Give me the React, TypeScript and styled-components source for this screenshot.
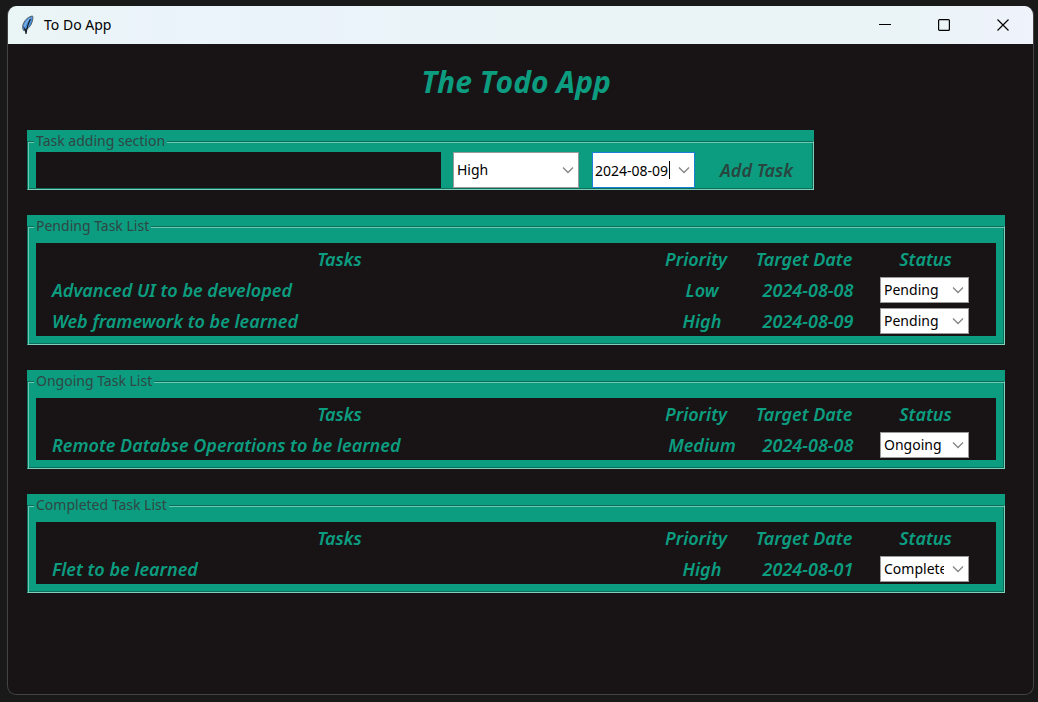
import React from "react";
import styled, { createGlobalStyle } from "styled-components";

const green = "#0c9d80";
const ink = "#181415";

const GlobalStyle = createGlobalStyle`
  * { box-sizing: border-box; }
  html, body, #root { height: 100%; }
  body {
    margin: 0;
    background: #191919;
    font-family: "Noto Sans", "Open Sans", sans-serif;
    font-size: 14px;
    color: #000;
  }
  button, input, select { font: inherit; margin: 0; border: 0; border-radius: 0; }
`;

const Desktop = styled.div`
  min-height: 100%;
  display: flex;
  padding: 6px 4px 7px 7px;
`;

const Window = styled.div`
  flex: 1;
  min-width: 0;
  display: flex;
  flex-direction: column;
  background: ${ink};
  border: 1px solid #444344;
  border-top: 0;
  border-radius: 9px;
  overflow: hidden;
`;

const TitleBar = styled.header`
  display: flex;
  align-items: center;
  height: 38px;
  padding: 0 1px 0 12px;
  background: linear-gradient(90deg, #eaf5f5 0%, #ebf3fb 18%, #eaf4f7 50%, #eaf4f7 88%, #eff3fb 100%);
`;

const AppName = styled.span`
  flex: 1;
  margin-left: 8px;
  font-size: 14px;
  line-height: 20px;
`;

const WindowButton = styled.button`
  display: flex;
  align-items: center;
  justify-content: center;
  width: 59px;
  height: 38px;
  padding: 0;
  background: transparent;
`;

const Main = styled.main`
  display: flex;
  flex-direction: column;
  gap: 25px;
  padding: 15px 28px 24px 19px;
`;

const Title = styled.h1`
  margin: 0;
  text-align: center;
  font-family: "Open Sans", "Noto Sans", sans-serif;
  font-size: 30px;
  line-height: 46px;
  font-weight: 700;
  font-style: italic;
  color: ${green};
`;

const Panel = styled.section<{ $fit?: boolean }>`
  background: ${green};
  width: ${(p) => (p.$fit ? "fit-content" : "auto")};
`;

const Frame = styled.fieldset<{ $top: number; $bottom: number }>`
  min-width: 0;
  margin: 0;
  padding: ${(p) => p.$top}px 8px ${(p) => p.$bottom}px;
  border: 1px solid;
  border-color: #0a6e5a #7fd0bb #7fd0bb #0a6e5a;
  box-shadow: inset 1px 1px 0 #6cc8b0, inset -1px -1px 0 #0a6e5a;
`;

const Legend = styled.legend`
  height: 22px;
  margin-left: -2px;
  padding: 0 2px;
  background: ${green};
  color: #2f4644;
  font-size: 14px;
  line-height: 22px;
`;

const AddRow = styled.form`
  display: flex;
  align-items: stretch;
  height: 36px;
`;

const TaskInput = styled.input`
  width: 405px;
  padding: 0 4px;
  margin-right: 12px;
  background: ${ink};
  color: ${green};
  outline: 0;
`;

const Box = styled.div<{ $width: number; $height: number; $active?: boolean }>`
  position: relative;
  display: flex;
  align-items: center;
  width: ${(p) => p.$width}px;
  height: ${(p) => p.$height}px;
  background: #fff;
  border: 1px solid ${(p) => (p.$active ? "#1a7fd8" : "#9a9a9a")};
`;

const Select = styled.select`
  appearance: none;
  width: 100%;
  height: 100%;
  padding: 0 24px 0 3px;
  background: transparent;
  color: #000;
  font-size: 14px;
  line-height: 20px;
  outline: 0;
`;

const ChevronSlot = styled.span`
  position: absolute;
  right: 4px;
  top: 0;
  bottom: 0;
  display: flex;
  align-items: center;
  pointer-events: none;
`;

const DateInput = styled.input`
  width: 76px;
  height: 100%;
  padding: 0 0 0 2px;
  background: transparent;
  outline: 0;
`;

const Caret = styled.span`
  width: 1px;
  height: 18px;
  background: #000;
`;

const AddButton = styled.button`
  width: 97px;
  margin-left: 13px;
  padding: 0;
  background: ${green};
  color: #28463f;
  font-size: 18px;
  font-weight: 600;
  font-style: italic;
`;

const DateGap = styled.div`
  margin-left: 13px;
`;

const TaskTable = styled.table`
  width: 100%;
  table-layout: fixed;
  border-collapse: collapse;
  background: ${ink};
  color: ${green};
  font-size: 18px;
  font-weight: 600;
  font-style: italic;
`;

const Row = styled.tr`
  height: 31px;
`;

const Head = styled.th<{ $width?: number; $right?: number }>`
  width: ${(p) => (p.$width ? `${p.$width}px` : "auto")};
  padding: 2px ${(p) => p.$right ?? 0}px 0 0;
  line-height: 29px;
  font-weight: inherit;
  text-align: center;
`;

const Cell = styled.td<{ $left?: number; $align?: string }>`
  padding: 2px 0 0 ${(p) => p.$left ?? 0}px;
  line-height: 29px;
  text-align: ${(p) => p.$align ?? "center"};
`;

const StatusCell = styled.td`
  padding: 0 0 0 21px;
`;

const StatusBox = styled(Box)`
  font-style: normal;
  font-weight: 400;
`;

const Chevron = () => (
  <ChevronSlot>
    <svg width="12" height="8" viewBox="0 0 12 8" fill="none" stroke="#858585" strokeWidth="1.3">
      <path d="M1 1.5 6 6.5 11 1.5" />
    </svg>
  </ChevronSlot>
);

const Feather = () => (
  <svg width="16" height="22" viewBox="0 0 16 22">
    <path d="M12.600 2C9 2.300 4.800 5.500 3.200 10c-1 2.800-.6 4.800.4 6.600C8 15.500 11.300 11.500 12.300 7.500c.5-2.200.8-4 .3-5.500Z" fill="#4a8fd6" stroke="#59636b" strokeWidth="1" />
    <path d="M10.800 4C7.500 6 5.500 9 4.500 12.500" stroke="#86b6e6" strokeWidth="1.200" fill="none" />
    <path d="M10.500 5C8.500 8.500 7 13 6 20" stroke="#15191f" strokeWidth="1.100" fill="none" />
    <path d="M3.200 12.500 5.800 20 7.500 14.500 5.500 15Z" fill="#1d242c" />
  </svg>
);

type Task = { name: string; priority: string; date: string };
type List = { title: string; status: string; tasks: Task[] };

const lists: List[] = [
  {
    title: "Pending Task List",
    status: "Pending",
    tasks: [
      { name: "Advanced UI to be developed", priority: "Low", date: "2024-08-08" },
      { name: "Web framework to be learned", priority: "High", date: "2024-08-09" },
    ],
  },
  {
    title: "Ongoing Task List",
    status: "Ongoing",
    tasks: [{ name: "Remote Databse Operations to be learned", priority: "Medium", date: "2024-08-08" }],
  },
  {
    title: "Completed Task List",
    status: "Completed",
    tasks: [{ name: "Flet to be learned", priority: "High", date: "2024-08-01" }],
  },
];

const TaskList = ({ list }: { list: List }) => (
  <Panel>
    <Frame $top={6} $bottom={8}>
      <Legend>{list.title}</Legend>
      <TaskTable>
        <thead>
          <Row>
            <Head>Tasks</Head>
            <Head $width={106}>Priority</Head>
            <Head $width={110}>Target Date</Head>
            <Head $width={137} $right={4}>Status</Head>
          </Row>
        </thead>
        <tbody>
          {list.tasks.map((task) => (
            <Row key={task.name}>
              <Cell $left={16} $align="left">{task.name}</Cell>
              <Cell $left={12}>{task.priority}</Cell>
              <Cell $left={8}>{task.date}</Cell>
              <StatusCell>
                <StatusBox $width={89} $height={26}>
                  <Select aria-label={`Status of ${task.name}`} defaultValue={list.status}>
                    <option>Pending</option>
                    <option>Ongoing</option>
                    <option>Completed</option>
                  </Select>
                  <Chevron />
                </StatusBox>
              </StatusCell>
            </Row>
          ))}
        </tbody>
      </TaskTable>
    </Frame>
  </Panel>
);

export default function App() {
  return (
    <>
      <GlobalStyle />
      <Desktop>
        <Window>
          <TitleBar>
            <Feather />
            <AppName>To Do App</AppName>
            <WindowButton aria-label="Minimize">
              <svg width="12" height="12" stroke="#000"><path d="M0 5.500h12" /></svg>
            </WindowButton>
            <WindowButton aria-label="Maximize">
              <svg width="12" height="12" stroke="#000" fill="none" strokeWidth="1.200"><rect x=".6" y=".6" width="10.800" height="10.800" rx="1" /></svg>
            </WindowButton>
            <WindowButton aria-label="Close">
              <svg width="12" height="12" stroke="#000" strokeWidth="1.200"><path d="m.5.5 11 11M11.500.5l-11 11" /></svg>
            </WindowButton>
          </TitleBar>
          <Main>
            <Title>The Todo App</Title>
            <Panel $fit>
              <Frame $top={0} $bottom={1}>
                <Legend>Task adding section</Legend>
                <AddRow onSubmit={(e) => e.preventDefault()}>
                  <TaskInput type="text" aria-label="Task" />
                  <Box $width={126} $height={36}>
                    <Select aria-label="Priority" defaultValue="High">
                      <option>High</option>
                      <option>Medium</option>
                      <option>Low</option>
                    </Select>
                    <Chevron />
                  </Box>
                  <DateGap>
                    <Box $width={103} $height={36} $active>
                      <DateInput type="text" aria-label="Target date" defaultValue="2024-08-09" />
                      <Caret />
                      <Chevron />
                    </Box>
                  </DateGap>
                  <AddButton type="submit">Add Task</AddButton>
                </AddRow>
              </Frame>
            </Panel>
            {lists.map((list) => (
              <TaskList key={list.title} list={list} />
            ))}
          </Main>
        </Window>
      </Desktop>
    </>
  );
}
